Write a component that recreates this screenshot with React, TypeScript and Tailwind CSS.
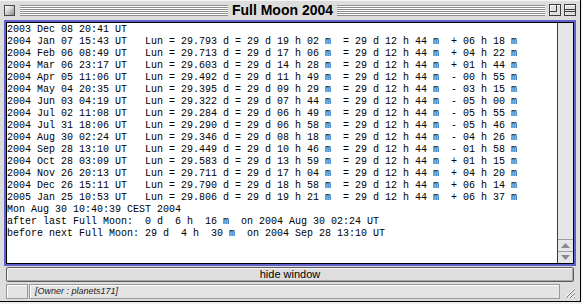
import React from "react";

const lines: string[] = [
  "2003 Dec 08 20:41 UT",
  "2004 Jan 07 15:43 UT   Lun = 29.793 d = 29 d 19 h 02 m  = 29 d 12 h 44 m  + 06 h 18 m",
  "2004 Feb 06 08:49 UT   Lun = 29.713 d = 29 d 17 h 06 m  = 29 d 12 h 44 m  + 04 h 22 m",
  "2004 Mar 06 23:17 UT   Lun = 29.603 d = 29 d 14 h 28 m  = 29 d 12 h 44 m  + 01 h 44 m",
  "2004 Apr 05 11:06 UT   Lun = 29.492 d = 29 d 11 h 49 m  = 29 d 12 h 44 m  - 00 h 55 m",
  "2004 May 04 20:35 UT   Lun = 29.395 d = 29 d 09 h 29 m  = 29 d 12 h 44 m  - 03 h 15 m",
  "2004 Jun 03 04:19 UT   Lun = 29.322 d = 29 d 07 h 44 m  = 29 d 12 h 44 m  - 05 h 00 m",
  "2004 Jul 02 11:08 UT   Lun = 29.284 d = 29 d 06 h 49 m  = 29 d 12 h 44 m  - 05 h 55 m",
  "2004 Jul 31 18:06 UT   Lun = 29.290 d = 29 d 06 h 58 m  = 29 d 12 h 44 m  - 05 h 46 m",
  "2004 Aug 30 02:24 UT   Lun = 29.346 d = 29 d 08 h 18 m  = 29 d 12 h 44 m  - 04 h 26 m",
  "2004 Sep 28 13:10 UT   Lun = 29.449 d = 29 d 10 h 46 m  = 29 d 12 h 44 m  - 01 h 58 m",
  "2004 Oct 28 03:09 UT   Lun = 29.583 d = 29 d 13 h 59 m  = 29 d 12 h 44 m  + 01 h 15 m",
  "2004 Nov 26 20:13 UT   Lun = 29.711 d = 29 d 17 h 04 m  = 29 d 12 h 44 m  + 04 h 20 m",
  "2004 Dec 26 15:11 UT   Lun = 29.790 d = 29 d 18 h 58 m  = 29 d 12 h 44 m  + 06 h 14 m",
  "2005 Jan 25 10:53 UT   Lun = 29.806 d = 29 d 19 h 21 m  = 29 d 12 h 44 m  + 06 h 37 m",
  "Mon Aug 30 10:40:39 CEST 2004",
  "after last Full Moon:  0 d  6 h  16 m  on 2004 Aug 30 02:24 UT",
  "before next Full Moon: 29 d  4 h  30 m  on 2004 Sep 28 13:10 UT",
];

const Stripes = () => (
  <div className="h-[11px] flex-1 bg-[repeating-linear-gradient(to_bottom,#8c8c8c_0px,#8c8c8c_1px,#ffffff_1px,#ffffff_2px)]" />
);

const CloseBox = () => (
  <div className="w-[11px] h-[11px] border border-[#4a4a4a] bg-gradient-to-br from-[#ffffff] via-[#cfcfcf] to-[#8e8e8e]" />
);

const ZoomBox = () => (
  <svg width="12" height="12" viewBox="0 0 12 12" shapeRendering="crispEdges">
    <rect x="0.5" y="0.5" width="11" height="11" fill="#dedede" stroke="#3c3c3c" />
    <path d="M1 1.5H11M1.5 1V11" stroke="#ffffff" />
    <path d="M7.5 1V7.5H1" stroke="#3c3c3c" fill="none" />
  </svg>
);

const CollapseBox = () => (
  <svg width="12" height="12" viewBox="0 0 12 12" shapeRendering="crispEdges">
    <rect x="0.5" y="0.5" width="11" height="11" fill="#dedede" stroke="#3c3c3c" />
    <path d="M1 1.5H11M1.5 1V11" stroke="#ffffff" />
    <path d="M1 5.5H11M1 7.5H11" stroke="#3c3c3c" />
  </svg>
);

const Grip = () => (
  <svg width="14" height="14" viewBox="0 0 14 14" shapeRendering="crispEdges">
    <path d="M13 3L3 13M13 7L7 13M13 11L11 13" stroke="#ffffff" fill="none" />
    <path d="M13 4L4 13M13 8L8 13M13 12L12 13" stroke="#7a7a7a" fill="none" />
  </svg>
);

const ScrollBar = () => (
  <div className="w-[16px] h-full flex flex-col border-l border-[#3c3c3c] bg-[#e6e6e6]">
    <div className="flex-1" />
    <div className="h-[12px] border-t border-[#a0a0a0] flex items-center justify-center">
      <svg width="9" height="5" viewBox="0 0 9 5">
        <path d="M4.5 0L9 5H0Z" fill="#8a8a8a" />
      </svg>
    </div>
    <div className="h-[12px] border-t border-[#a0a0a0] flex items-center justify-center">
      <svg width="9" height="5" viewBox="0 0 9 5">
        <path d="M0 0H9L4.5 5Z" fill="#8a8a8a" />
      </svg>
    </div>
  </div>
);

export default function App() {
  return (
    <div className="w-[582px] h-[304px] bg-[#f0f0f0]">
      <div className="w-[581px] h-[302px] bg-[#dddddd] border-r border-b border-black flex flex-col">
        {/* title bar */}
        <div className="h-[20px] flex items-center pl-[4px] pr-[4px] shadow-[inset_0_1px_0_#f4f4f4]">
          <CloseBox />
          <div className="flex-1 flex items-center ml-[5px]">
            <Stripes />
            <span className="px-[4px] text-[14px] leading-[16px] font-bold text-black font-['Liberation_Sans',sans-serif] whitespace-nowrap">
              Full Moon 2004
            </span>
            <Stripes />
          </div>
          <div className="ml-[4px] flex items-center gap-[3px]">
            <ZoomBox />
            <CollapseBox />
          </div>
        </div>

        <div className="flex-1 flex flex-col px-[4px]">
          {/* text area */}
          <div className="h-[246px] border-2 border-[#6060cc]">
            <div className="h-full border border-black bg-white flex">
              <pre className="flex-1 m-0 pt-[1px] overflow-hidden text-[10px] leading-[12px] text-black font-['Liberation_Mono',monospace]">
                {lines.join("\n")}
              </pre>
              <ScrollBar />
            </div>
          </div>

          {/* button */}
          <div className="mt-[1px] pl-[2px] pr-[2px]">
            <div className="h-[15px] rounded-[2px] border border-[#5a5a5a] bg-[#dedede] shadow-[inset_1px_1px_0_#f8f8f8,inset_-1px_-1px_0_#a8a8a8] flex items-center justify-center text-[11px] leading-none text-black font-['Liberation_Sans',sans-serif]">
              hide window
            </div>
          </div>

          {/* status bar */}
          <div className="mt-[2px] h-[15px] flex items-center gap-[1px] pl-[2px]">
            <div className="w-[22px] h-full border border-[#9a9a9a] bg-[#e4e4e4] shadow-[inset_1px_1px_0_#ffffff]" />
            <div className="flex-1 h-full border border-[#9a9a9a] bg-[#e4e4e4] shadow-[inset_1px_1px_0_#ffffff] flex items-center pl-[5px] text-[9px] italic text-[#222] font-['Liberation_Sans',sans-serif]">
              [Owner : planets171]
            </div>
            <div className="w-[15px] h-full flex items-end justify-end">
              <Grip />
            </div>
          </div>
        </div>
      </div>
    </div>
  );
}
